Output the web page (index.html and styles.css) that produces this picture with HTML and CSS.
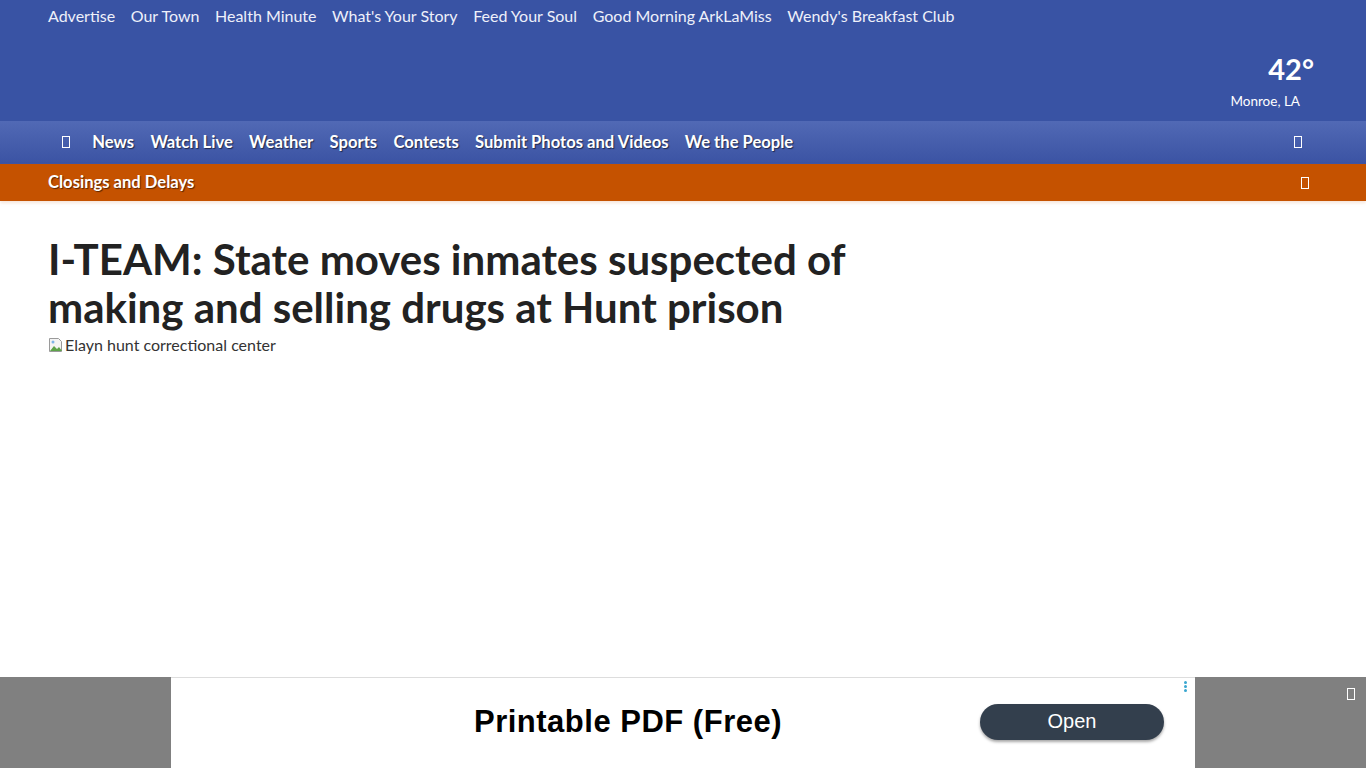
FILE: index.html
```html
<!DOCTYPE html>
<html>
<head>
<meta charset="UTF-8">
<title>I-TEAM: State moves inmates suspected of making and selling drugs at Hunt prison</title>
<link rel="stylesheet" href="styles.css">
</head>
<body>
<header class="masthead">
  <nav class="top-links">
    <a href="#">Advertise</a>
    <a href="#">Our Town</a>
    <a href="#">Health Minute</a>
    <a href="#">What's Your Story</a>
    <a href="#">Feed Your Soul</a>
    <a href="#">Good Morning ArkLaMiss</a>
    <a href="#">Wendy's Breakfast Club</a>
  </nav>
  <div class="weather">
    <div class="temp">42°</div>
    <div class="city">Monroe, LA</div>
  </div>
</header>
<nav class="main-nav">
  <span class="tofu"></span>
  <a href="#">News</a>
  <a href="#">Watch Live</a>
  <a href="#">Weather</a>
  <a href="#">Sports</a>
  <a href="#">Contests</a>
  <a href="#">Submit Photos and Videos</a>
  <a href="#">We the People</a>
  <span class="tofu push"></span>
</nav>
<div class="alert-bar">
  <a href="#">Closings and Delays</a>
  <span class="tofu push"></span>
</div>
<main class="article">
  <h1>I-TEAM: State moves inmates suspected of making and selling drugs at Hunt prison</h1>
  <div class="broken-img">
    <svg width="16" height="16" viewBox="0 0 16 16">
      <path d="M1.5 1.5h9l3 3v10h-12z" fill="#f4f4f4" stroke="#9a9a9a"/>
      <path d="M2 14l4-5 3 3 2-2 3 4z" fill="#5ea34a"/>
      <circle cx="5" cy="5" r="1.5" fill="#7fb4e8"/>
    </svg>
    <span>Elayn hunt correctional center</span>
  </div>
</main>
<aside class="ad-bar">
  <div class="ad-box">
    <span class="ad-title">Printable PDF (Free)</span>
    <span class="ad-btn">Open</span>
    <span class="ad-dots"><i></i><i></i><i></i></span>
  </div>
  <span class="tofu ad-close"></span>
</aside>
</body>
</html>
```

FILE: styles.css
```css
body {
  margin: 0;
  font-family: Lato, "Open Sans", sans-serif;
  color: #222;
  background: #fff;
}
a { color: inherit; text-decoration: none; }

.masthead {
  background: #3953a4;
  color: #fff;
  height: 121px;
  padding: 0 52px 0 48px;
  display: flex;
  justify-content: space-between;
}
.top-links {
  display: flex;
  gap: 15.6px;
  height: 31px;
  align-items: center;
  font-size: 16px;
  color: #eef0fa;
}
.weather {
  margin-top: 52px;
  display: flex;
  flex-direction: column;
  align-items: flex-end;
}
.temp {
  font-size: 29px;
  font-weight: 700;
  line-height: 34px;
}
.city {
  font-size: 13.5px;
  line-height: 16px;
  margin-top: 7px;
  margin-right: 14px;
}

.tofu {
  display: inline-block;
  width: 6px;
  height: 10px;
  border: 1px solid #fff;
  flex: none;
}
.push { margin-left: auto; }

.main-nav {
  height: 43px;
  background: linear-gradient(#5169b5, #3b53a3);
  display: flex;
  align-items: center;
  gap: 16.3px;
  padding: 0 58px 0 62px;
  color: #fff;
  font-size: 16.6px;
  font-weight: 700;
  text-shadow: 1px 1px 1px rgba(0,0,0,.55);
}
.main-nav a { margin-top: -2px; }
.main-nav .tofu { margin-right: 6px; margin-top: -2px; }

.alert-bar {
  height: 37px;
  background: #c55200;
  display: flex;
  align-items: center;
  padding: 0 57px 0 48px;
  color: #fff;
  font-size: 16.6px;
  font-weight: 700;
  text-shadow: 1px 1px 1px rgba(0,0,0,.55);
  box-shadow: 0 2px 3px rgba(230,180,150,.35);
}
.alert-bar a { margin-top: -2px; }

.article { padding: 34px 48px 0; }
.article h1 {
  margin: 0;
  width: 830px;
  font-size: 42px;
  line-height: 48px;
  font-weight: 700;
  color: #222;
}
.broken-img {
  display: flex;
  align-items: center;
  gap: 1px;
  margin-top: 4px;
  font-size: 16px;
  color: #333;
}

.ad-bar {
  position: fixed;
  left: 0;
  right: 0;
  bottom: 0;
  height: 91px;
  background: #808080;
  display: flex;
  justify-content: center;
}
.ad-box {
  position: relative;
  width: 1024px;
  background: #fff;
  border-top: 1px solid #ddd;
  display: flex;
  align-items: center;
  box-sizing: border-box;
}
.ad-title {
  font-family: "Liberation Sans", Arial, sans-serif;
  font-weight: 700;
  font-size: 31px;
  color: #000;
  margin-left: 303px;
  margin-top: -3px;
  letter-spacing: 0.5px;
}
.ad-btn {
  margin-left: auto;
  margin-right: 31px;
  margin-top: -3px;
  width: 184px;
  height: 36px;
  border-radius: 18px;
  background: #333f4d;
  color: #fff;
  font-family: "Liberation Sans", Arial, sans-serif;
  font-size: 20px;
  display: flex;
  align-items: center;
  justify-content: center;
  box-shadow: 0 2px 3px rgba(0,0,0,.35);
}
.ad-dots {
  position: absolute;
  right: 8px;
  top: 3px;
  display: flex;
  flex-direction: column;
  gap: 1px;
}
.ad-dots i {
  width: 3px;
  height: 3px;
  border-radius: 50%;
  background: #3aa7d0;
}
.ad-close {
  position: absolute;
  right: 11px;
  top: 11px;
  width: 6px;
  height: 10px;
}
```
